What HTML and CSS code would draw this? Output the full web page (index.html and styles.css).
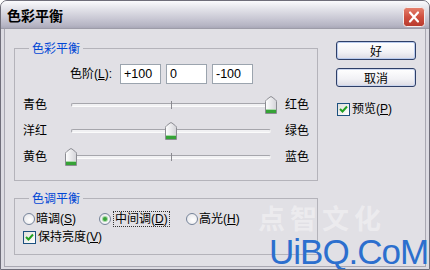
FILE: index.html
```
<!DOCTYPE html>
<html lang="zh-CN">
<head>
	<meta charset="UTF-8">
	<title>色彩平衡</title>
	<link rel="stylesheet" href="styles.css">
</head>
<body>
	<div class="window">
		<div class="titlebar">
			<span class="title">色彩平衡</span>
			<span class="close">
				<svg width="22" height="20" viewBox="0 0 22 20">
					<defs>
						<linearGradient id="cg" x1="0" y1="0" x2="0" y2="1">
							<stop offset="0" stop-color="#e6826f"/>
							<stop offset="0.5" stop-color="#cf4f3f"/>
							<stop offset="1" stop-color="#b73a2e"/>
						</linearGradient>
					</defs>
					<rect x="0.5" y="0.5" width="21" height="19" rx="3" fill="url(#cg)" stroke="#f4eeee"/>
					<path d="M7 5.5 L15 14.5 M15 5.5 L7 14.5" stroke="#fff" stroke-width="2.2" stroke-linecap="round"/>
				</svg>
			</span>
		</div>
		<div class="client">
			<div class="main">
				<fieldset class="group group_color">
					<legend>色彩平衡</legend>
					<div class="levels">
						<span class="levels_label">色阶(<u>L</u>):</span>
						<span class="num">+100</span>
						<span class="num">0</span>
						<span class="num">-100</span>
					</div>
					<div class="slider_row">
						<span class="side">青色</span>
						<div class="slider">
							<div class="track"><i class="tick"></i></div>
							<svg class="thumb" style="left: 200px" width="12" height="18" viewBox="0 0 12 18">
								<defs>
									<linearGradient id="tg" x1="0" y1="0" x2="1" y2="0">
										<stop offset="0" stop-color="#ffffff"/>
										<stop offset="1" stop-color="#d3d3d8"/>
									</linearGradient>
								</defs>
								<path d="M0.5 5.5 Q0.5 4.5 1.5 3.8 L5 1 Q6 0.3 7 1 L10.5 3.8 Q11.5 4.5 11.5 5.5 V17.5 H0.5 Z" fill="url(#tg)" stroke="#8b8c92"/>
								<rect x="1" y="13" width="10" height="1" fill="#a8d9a8"/>
								<rect x="1" y="14" width="10" height="3" fill="#35a236"/>
							</svg>
						</div>
						<span class="side side_r">红色</span>
					</div>
					<div class="slider_row">
						<span class="side">洋红</span>
						<div class="slider">
							<div class="track"><i class="tick"></i></div>
							<svg class="thumb" style="left: 100px" width="12" height="18" viewBox="0 0 12 18">
								<path d="M0.5 5.5 Q0.5 4.5 1.5 3.8 L5 1 Q6 0.3 7 1 L10.5 3.8 Q11.5 4.5 11.5 5.5 V17.5 H0.5 Z" fill="url(#tg)" stroke="#8b8c92"/>
								<rect x="1" y="13" width="10" height="1" fill="#a8d9a8"/>
								<rect x="1" y="14" width="10" height="3" fill="#35a236"/>
							</svg>
						</div>
						<span class="side side_r">绿色</span>
					</div>
					<div class="slider_row">
						<span class="side">黄色</span>
						<div class="slider">
							<div class="track"><i class="tick"></i></div>
							<svg class="thumb" style="left: 0px" width="12" height="18" viewBox="0 0 12 18">
								<path d="M0.5 5.5 Q0.5 4.5 1.5 3.8 L5 1 Q6 0.3 7 1 L10.5 3.8 Q11.5 4.5 11.5 5.5 V17.5 H0.5 Z" fill="url(#tg)" stroke="#8b8c92"/>
								<rect x="1" y="13" width="10" height="1" fill="#a8d9a8"/>
								<rect x="1" y="14" width="10" height="3" fill="#35a236"/>
							</svg>
						</div>
						<span class="side side_r">蓝色</span>
					</div>
				</fieldset>

				<fieldset class="group group_tone">
					<legend>色调平衡</legend>
					<div class="radios">
						<span class="option opt1"><i class="radio"></i>暗调(<u>S</u>)</span>
						<span class="option opt2"><i class="radio on"></i><span class="focus">中间调(<u>D</u>)</span></span>
						<span class="option"><i class="radio"></i>高光(<u>H</u>)</span>
					</div>
					<div class="check_row">
						<span class="check">
							<svg width="11" height="11" viewBox="0 0 11 11"><path d="M2 5 L4.5 7.5 L9 2.5" fill="none" stroke="#21a121" stroke-width="2"/></svg>
						</span>保持亮度(<u>V</u>)
					</div>
				</fieldset>
			</div>

			<div class="side_col">
				<span class="btn btn_default">好</span>
				<span class="btn">取消</span>
				<div class="check_row preview">
					<span class="check">
						<svg width="11" height="11" viewBox="0 0 11 11"><path d="M2 5 L4.5 7.5 L9 2.5" fill="none" stroke="#21a121" stroke-width="2"/></svg>
					</span>预览(<u>P</u>)
				</div>
			</div>
		</div>

		<span class="mark_cn">点智文化</span>
		<span class="mark_en">UiBQ.CoM</span>
	</div>
</body>
</html>
```

FILE: styles.css
```
body{
	margin: 0;
	font-family: "Liberation Sans", "Noto Sans CJK SC", sans-serif;
	font-size: 12px;
	color: #000;
}
.window{
	position: relative;
	width: 430px;
	height: 270px;
	box-sizing: border-box;
	border: 1px solid #6f6e7a;
	border-radius: 7px 7px 0 0;
	background: #dcdbe2;
	padding: 0 3px 3px;
	overflow: hidden;
}
.titlebar{
	height: 27px;
	margin: 0 -3px;
	padding: 0 4px 0 6px;
	display: flex;
	align-items: center;
	justify-content: space-between;
	background: linear-gradient(#fbfbfd, #e6e6ec 25%, #c9c8d4 65%, #b6b5c4 90%, #a9a8b8);
	border-bottom: 1px solid #9d9ca8;
}
.title{
	font-family: "Noto Sans CJK SC", sans-serif;
	font-weight: bold;
	font-size: 14px;
	line-height: 16px;
}
.close{
	display: flex;
	margin-top: 5px;
}
.client{
	height: 238px;
	box-sizing: border-box;
	border: 1px solid #a9a8b2;
	border-top: 0;
	background: #e1e0e5;
	padding: 12px 0 0 9px;
	display: flex;
	gap: 18px;
}
.main{
	display: flex;
	flex-direction: column;
	gap: 10px;
}
.group{
	margin: 0;
	width: 304px;
	box-sizing: border-box;
	border: 1px solid #b4b3ba;
	min-width: 0;
}
.group legend{
	padding: 0 3px;
	margin-left: 6px;
	color: #0046d5;
	font-family: "Noto Sans CJK SC", sans-serif;
	line-height: 14px;
	height: 14px;
}
.group_color{
	padding: 9px 0 10px 8px;
}
.group_tone{
	padding: 6px 0 9px 8px;
}
.levels{
	display: flex;
	align-items: center;
	height: 20px;
	gap: 5px;
	margin-bottom: 8px;
}
.levels_label{
	width: 45px;
	margin-left: 47px;
	line-height: 14px;
}
.num{
	width: 41px;
	height: 20px;
	box-sizing: border-box;
	border: 1px solid #9ba4ae;
	background: #fff;
	padding-left: 3px;
	line-height: 18px;
	font-size: 12.5px;
}
.slider_row{
	display: flex;
	align-items: center;
	height: 26px;
}
.side{
	width: 42px;
	flex-shrink: 0;
	line-height: 14px;
}
.side_r{
	width: auto;
	margin-left: 8px;
}
.slider{
	position: relative;
	width: 212px;
	flex-shrink: 0;
	height: 26px;
	display: flex;
	align-items: center;
}
.track{
	position: relative;
	flex: 1;
	margin: 0 6px;
	height: 4px;
	box-sizing: border-box;
	border: 1px solid #a6a6ac;
	border-bottom-color: #fbfbfb;
	border-right-color: #f0f0f0;
	border-radius: 2px;
	background: #f1f1f3;
}
.tick{
	position: absolute;
	left: 99px;
	top: -3px;
	width: 1px;
	height: 8px;
	background: #8a8a90;
}
.thumb{
	position: absolute;
	top: 4px;
}
.radios{
	display: flex;
	align-items: center;
	height: 16px;
}
.option{
	display: flex;
	align-items: center;
	line-height: 14px;
}
.opt1{
	width: 76px;
}
.opt2{
	width: 87px;
}
.radio{
	width: 12px;
	height: 12px;
	box-sizing: border-box;
	border: 1px solid #76849a;
	border-radius: 50%;
	background: radial-gradient(circle at 60% 60%, #ffffff, #e2e2e6);
	margin-right: 1px;
	display: flex;
	align-items: center;
	justify-content: center;
}
.radio.on::after{
	content: "";
	width: 4px;
	height: 4px;
	border-radius: 50%;
	background: #3aa23a;
	box-shadow: 0 0 0 1px #a3d7a3;
}
.focus{
	margin-left: 2px;
	outline: 1px dotted #333;
	padding: 0 1px;
}
.check_row{
	display: flex;
	align-items: center;
	height: 16px;
	margin-top: 2px;
	line-height: 14px;
}
.check{
	width: 13px;
	height: 13px;
	box-sizing: border-box;
	border: 1px solid #1c5180;
	background: linear-gradient(135deg, #e0e0db, #ffffff);
	margin-right: 2px;
	display: flex;
	align-items: center;
	justify-content: center;
}
.side_col{
	display: flex;
	flex-direction: column;
	width: 80px;
}
.btn{
	height: 19px;
	box-sizing: border-box;
	border: 1px solid #2e3f68;
	border-radius: 3px;
	background: linear-gradient(#ffffff, #f1f1f5 60%, #dcdbe4);
	box-shadow: inset 0 0 0 1px #cbd6ee;
	font-family: "Noto Sans CJK SC", sans-serif;
	line-height: 17px;
	text-align: center;
}
.btn + .btn{
	margin-top: 8px;
}
.btn_default{
	box-shadow: inset 0 0 0 1px #b9cbee;
}
.preview{
	margin-top: 14px;
	margin-left: 1px;
}
.mark_cn{
	position: absolute;
	left: 257px;
	top: 203px;
	font-family: "Noto Sans CJK SC", sans-serif;
	font-weight: bold;
	font-size: 27px;
	line-height: 28px;
	letter-spacing: 5px;
	color: rgba(255, 255, 255, 0.38);
}
.mark_en{
	position: absolute;
	left: 268px;
	top: 235px;
	font-family: "Liberation Sans", sans-serif;
	font-size: 35px;
	line-height: 32px;
	letter-spacing: -1px;
	color: #2c6fce;
}
```
